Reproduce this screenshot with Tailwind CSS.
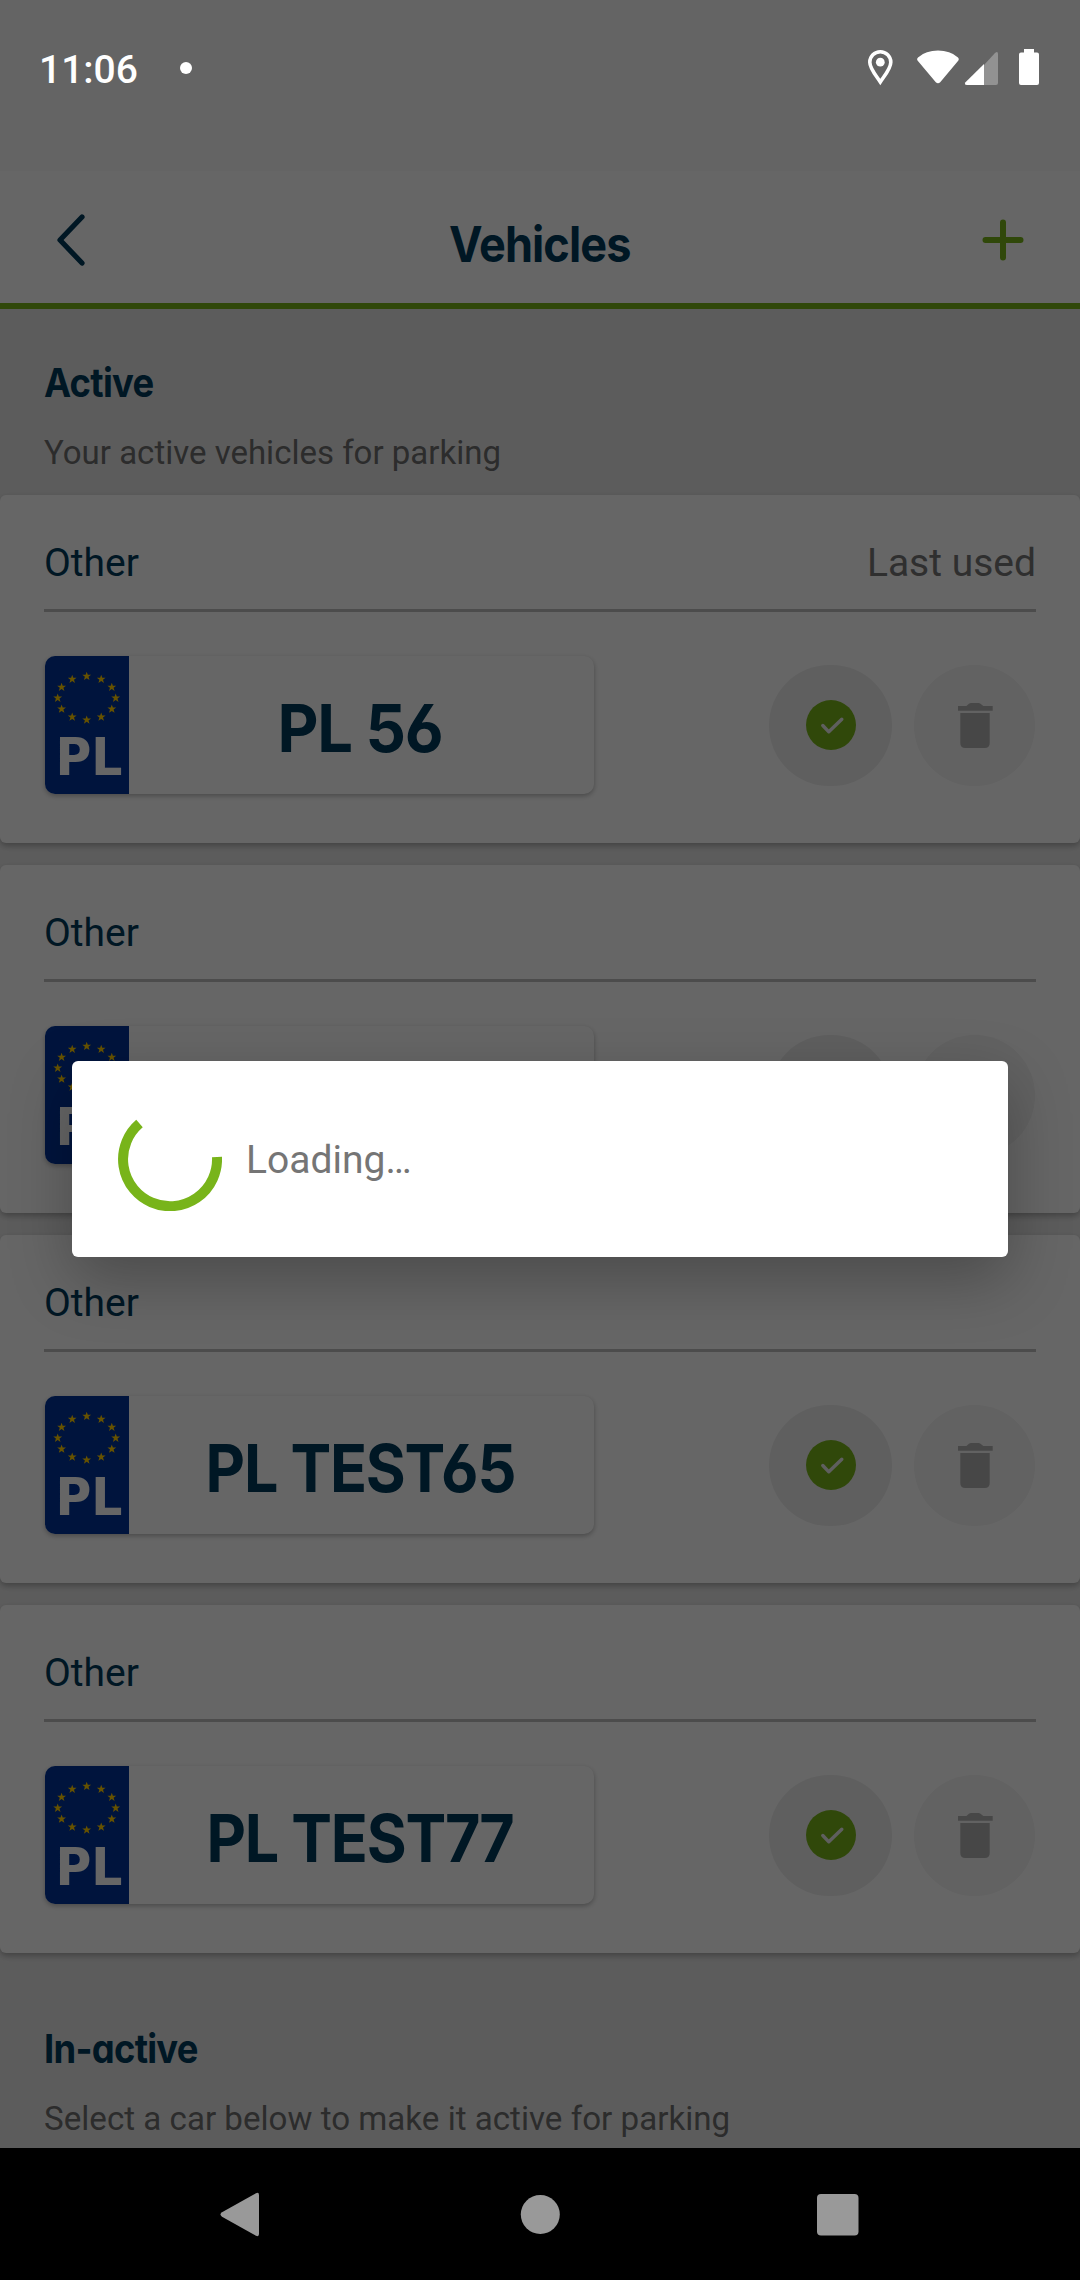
<!DOCTYPE html>
<html lang="en">
<head>
<meta charset="utf-8">
<title>Vehicles</title>
<script src="https://cdn.jsdelivr.net/npm/@tailwindcss/browser@4"></script>
</head>
<body class="font-['Roboto',sans-serif] bg-black">
<svg class="hidden" aria-hidden="true">
  <defs>
    <path id="star" d="M0 -4.4 L1.1 -1.4 L4.4 -1.4 L1.8 .6 L2.8 3.9 L0 2 L-2.8 3.9 L-1.8 .6 L-4.4 -1.4 L-1.1 -1.4 Z"/>
    <symbol id="stars" viewBox="0 0 84 84">
      <g fill="#ffcc00">
        <use href="#star" x="41.7" y="20.2"/><use href="#star" x="56.2" y="23.1"/><use href="#star" x="66.8" y="31.1"/>
        <use href="#star" x="70.7" y="42"/><use href="#star" x="66.8" y="52.9"/><use href="#star" x="56.2" y="60.9"/>
        <use href="#star" x="41.7" y="63.8"/><use href="#star" x="27.2" y="60.9"/><use href="#star" x="16.6" y="52.9"/>
        <use href="#star" x="12.7" y="42"/><use href="#star" x="16.6" y="31.1"/><use href="#star" x="27.2" y="23.1"/>
      </g>
    </symbol>
    <symbol id="check" viewBox="0 0 50 50">
      <circle cx="25" cy="25" r="25" fill="#78b41a"/>
      <path d="M16.8 25.5 L22.8 31.8 L35.8 19.2" fill="none" stroke="#ededed" stroke-width="3.4" stroke-linecap="round" stroke-linejoin="round"/>
    </symbol>
    <symbol id="trash" viewBox="0 0 36 45">
      <path fill="#b2b2b2" d="M1 3 H9.4 L12 .8 Q13 0 14 0 H21.5 Q22.5 0 23.5 .8 L26.3 3 H35.7 V7.7 H1 Z M3.3 10 H32.7 V40 Q32.7 45 27.7 45 H8.3 Q3.3 45 3.3 40 Z"/>
    </symbol>
  </defs>
</svg>

<div class="relative flex h-[2280px] w-[1080px] flex-col overflow-hidden">
  <!-- App screen -->
  <div class="flex h-[2148px] flex-col overflow-hidden bg-[#e7e7e7]">
    <div class="h-[171px] shrink-0 bg-[#fafafa]"></div>
    <header class="flex h-[138px] shrink-0 items-center justify-between border-b-[6px] border-[#78b41a] bg-white px-[54px] pt-1.5">
      <svg class="h-[60px] w-[60px]" viewBox="0 0 60 60" fill="none" stroke="#003a5a" stroke-width="5.2" stroke-linecap="round" stroke-linejoin="round"><path d="M28 7 L6 30 L28 53"/></svg>
      <h1 class="scale-x-[.91] pt-2 font-['Inter',sans-serif] text-[49.5px] leading-[60px] font-bold tracking-[-.02em] text-[#003a5a] [font-feature-settings:'cv11','ss01']">Vehicles</h1>
      <svg class="h-[60px] w-[60px]" viewBox="0 0 60 60" fill="none" stroke="#78b41a" stroke-width="6" stroke-linecap="round"><path d="M37 12.5 V47.5 M19.5 30 H54.5"/></svg>
    </header>

    <section class="shrink-0 px-[44px] pt-[44px] pb-[22px]">
      <h2 class="origin-left scale-x-[.91] font-['Inter',sans-serif] text-[40px] leading-[60px] font-bold tracking-[-.02em] text-[#003a5a] [font-feature-settings:'cv11','ss01']">Active</h2>
      <p class="mt-[20px] text-[33px] leading-[40px] text-[#6f6f6f]">Your active vehicles for parking</p>
    </section>

    <div class="flex shrink-0 flex-col gap-[22px]">
      <article class="h-[348px] rounded-[6px] bg-white px-[44px] pt-[22px] shadow-[0_3px_6px_rgba(0,0,0,.28)]">
        <div class="flex h-[95px] items-center justify-between border-b-[3px] border-[#bfbfbf] text-[39px]">
          <span class="text-[#003a5a]">Other</span><span class="text-[#757575]">Last used</span>
        </div>
        <div class="mt-[44px] flex items-center">
          <div class="ml-px flex h-[138px] w-[549px] overflow-hidden rounded-[10px] bg-white shadow-[0_2px_5px_rgba(0,0,0,.28)]">
            <svg class="h-[138px] w-[84px] shrink-0 bg-[#003399]" viewBox="0 0 84 138"><use href="#stars" width="84" height="84"/><text transform="translate(10.5 119) scale(.94 1)" class="font-['DejaVu_Sans',sans-serif] text-[52px] font-bold" fill="#fff">PL</text></svg>
            <div class="flex flex-1 items-center justify-center pt-1.5 pr-1"><span class="scale-x-[.96] font-['Inter',sans-serif] text-[66px] font-bold tracking-[-.02em] text-[#003a5a] [font-feature-settings:'cv11','ss01']">PL 56</span></div>
          </div>
          <div class="mr-px ml-auto flex gap-[22px]">
            <div class="flex h-[121px] w-[123px] items-center justify-center rounded-full bg-[#ededed]"><svg class="size-[50px]"><use href="#check"/></svg></div>
            <div class="flex size-[121px] items-center justify-center rounded-full bg-[#f4f4f4]"><svg class="h-[45px] w-[36px]"><use href="#trash"/></svg></div>
          </div>
        </div>
      </article>

      <article class="h-[348px] rounded-[6px] bg-white px-[44px] pt-[22px] shadow-[0_3px_6px_rgba(0,0,0,.28)]">
        <div class="flex h-[95px] items-center justify-between border-b-[3px] border-[#bfbfbf] text-[39px]">
          <span class="text-[#003a5a]">Other</span>
        </div>
        <div class="mt-[44px] flex items-center">
          <div class="ml-px flex h-[138px] w-[549px] overflow-hidden rounded-[10px] bg-white shadow-[0_2px_5px_rgba(0,0,0,.28)]">
            <svg class="h-[138px] w-[84px] shrink-0 bg-[#003399]" viewBox="0 0 84 138"><use href="#stars" width="84" height="84"/><text transform="translate(10.5 119) scale(.94 1)" class="font-['DejaVu_Sans',sans-serif] text-[52px] font-bold" fill="#fff">PL</text></svg>
          </div>
          <div class="mr-px ml-auto flex gap-[22px]">
            <div class="h-[121px] w-[123px] rounded-full bg-[#ededed]"></div>
            <div class="size-[121px] rounded-full bg-[#f4f4f4]"></div>
          </div>
        </div>
      </article>

      <article class="h-[348px] rounded-[6px] bg-white px-[44px] pt-[22px] shadow-[0_3px_6px_rgba(0,0,0,.28)]">
        <div class="flex h-[95px] items-center justify-between border-b-[3px] border-[#bfbfbf] text-[39px]">
          <span class="text-[#003a5a]">Other</span>
        </div>
        <div class="mt-[44px] flex items-center">
          <div class="ml-px flex h-[138px] w-[549px] overflow-hidden rounded-[10px] bg-white shadow-[0_2px_5px_rgba(0,0,0,.28)]">
            <svg class="h-[138px] w-[84px] shrink-0 bg-[#003399]" viewBox="0 0 84 138"><use href="#stars" width="84" height="84"/><text transform="translate(10.5 119) scale(.94 1)" class="font-['DejaVu_Sans',sans-serif] text-[52px] font-bold" fill="#fff">PL</text></svg>
            <div class="flex flex-1 items-center justify-center pt-1.5 pr-[3px]"><span class="scale-x-[.925] font-['Inter',sans-serif] text-[66px] font-bold tracking-[-.02em] whitespace-nowrap text-[#003a5a] [font-feature-settings:'cv11','ss01']">PL TEST65</span></div>
          </div>
          <div class="mr-px ml-auto flex gap-[22px]">
            <div class="flex h-[121px] w-[123px] items-center justify-center rounded-full bg-[#ededed]"><svg class="size-[50px]"><use href="#check"/></svg></div>
            <div class="flex size-[121px] items-center justify-center rounded-full bg-[#f4f4f4]"><svg class="h-[45px] w-[36px]"><use href="#trash"/></svg></div>
          </div>
        </div>
      </article>

      <article class="h-[348px] rounded-[6px] bg-white px-[44px] pt-[22px] shadow-[0_3px_6px_rgba(0,0,0,.28)]">
        <div class="flex h-[95px] items-center justify-between border-b-[3px] border-[#bfbfbf] text-[39px]">
          <span class="text-[#003a5a]">Other</span>
        </div>
        <div class="mt-[44px] flex items-center">
          <div class="ml-px flex h-[138px] w-[549px] overflow-hidden rounded-[10px] bg-white shadow-[0_2px_5px_rgba(0,0,0,.28)]">
            <svg class="h-[138px] w-[84px] shrink-0 bg-[#003399]" viewBox="0 0 84 138"><use href="#stars" width="84" height="84"/><text transform="translate(10.5 119) scale(.94 1)" class="font-['DejaVu_Sans',sans-serif] text-[52px] font-bold" fill="#fff">PL</text></svg>
            <div class="flex flex-1 items-center justify-center pt-1.5 pr-[3px]"><span class="scale-x-[.925] font-['Inter',sans-serif] text-[66px] font-bold tracking-[-.02em] whitespace-nowrap text-[#003a5a] [font-feature-settings:'cv11','ss01'] [font-kerning:none]">PL TEST77</span></div>
          </div>
          <div class="mr-px ml-auto flex gap-[22px]">
            <div class="flex h-[121px] w-[123px] items-center justify-center rounded-full bg-[#ededed]"><svg class="size-[50px]"><use href="#check"/></svg></div>
            <div class="flex size-[121px] items-center justify-center rounded-full bg-[#f4f4f4]"><svg class="h-[45px] w-[36px]"><use href="#trash"/></svg></div>
          </div>
        </div>
      </article>
    </div>

    <section class="shrink-0 px-[44px] pt-[66px]">
      <h2 class="origin-left scale-x-[.91] font-['Inter',sans-serif] text-[40px] leading-[60px] font-bold tracking-[-.02em] text-[#003a5a] [font-feature-settings:'cv11','ss01']">In-active</h2>
      <p class="mt-[20px] text-[33.15px] leading-[40px] text-[#6f6f6f]">Select a car below to make it active for parking</p>
    </section>
  </div>

  <!-- System navigation bar -->
  <nav class="flex h-[132px] shrink-0 items-center bg-black">
    <svg class="h-[132px] w-[1080px]" viewBox="0 0 1080 132" fill="#999">
      <path d="M222 64.3 L256 45.2 Q259 44 259 47 V86 Q259 89 256 87.8 L222 68.7 Q219 66.5 222 64.3 Z"/>
      <circle cx="540.3" cy="66.5" r="19.5"/>
      <rect x="817" y="46" width="41.5" height="41.5" rx="4"/>
    </svg>
  </nav>

  <!-- Dimmed backdrop with the loading dialog -->
  <div class="absolute inset-x-0 top-0 h-[2148px] overflow-hidden bg-black/60">
    <div class="absolute top-[1061px] left-[72px] flex h-[196px] w-[936px] items-center rounded-[6px] bg-white pl-[46px] shadow-[0_22px_62px_rgba(0,0,0,.27)]">
      <svg class="size-[104px]" viewBox="0 0 104 104" fill="none" stroke="#78b41a" stroke-width="10"><path d="M99 50 A47 47 0 1 1 21.5 16.5"/></svg>
      <span class="ml-[24px] pt-[3px] text-[39px] text-[#757575]">Loading…</span>
    </div>
  </div>

  <!-- Status bar -->
  <div class="absolute inset-x-0 top-0 flex h-[136px] items-center pr-[40px] pl-[39px] text-white">
    <span class="pt-[5px] text-[39px] font-medium">11:06</span>
    <span class="ml-[42px] size-[12px] rounded-full bg-white"></span>
    <svg class="ml-auto h-[40px] w-[174px]" viewBox="866 48 174 40" fill="#fff">
      <path fill="none" stroke="#fff" stroke-width="3.6" d="M880.3 82 C876 75.5 869.8 68.5 869.8 62.2 A10.5 10.5 0 0 1 890.8 62.2 C890.8 68.5 884.6 75.5 880.3 82 Z"/>
      <circle cx="880.3" cy="62.2" r="4.4"/>
      <path d="M917.5 60.5 Q916.3 58.8 918 57.4 Q926 50.6 938 50.6 Q950 50.6 958 57.4 Q959.5 58.8 958.4 60.5 L940.2 82.3 Q938 84.3 935.8 82.3 Z"/>
      <path fill="#929292" d="M984 65 L995 53 Q998 50.8 998 54 V83 Q998 85 996 85 H984 Z"/>
      <path d="M984 64 V85 H967 Q963.8 85 965.5 82.3 Z"/>
      <path d="M1024 49 H1034 V52.5 H1037 Q1039 52.5 1039 54.5 V83 Q1039 85 1037 85 H1021 Q1019 85 1019 83 V54.5 Q1019 52.5 1021 52.5 H1024 Z"/>
    </svg>
  </div>
</div>
</body>
</html>
